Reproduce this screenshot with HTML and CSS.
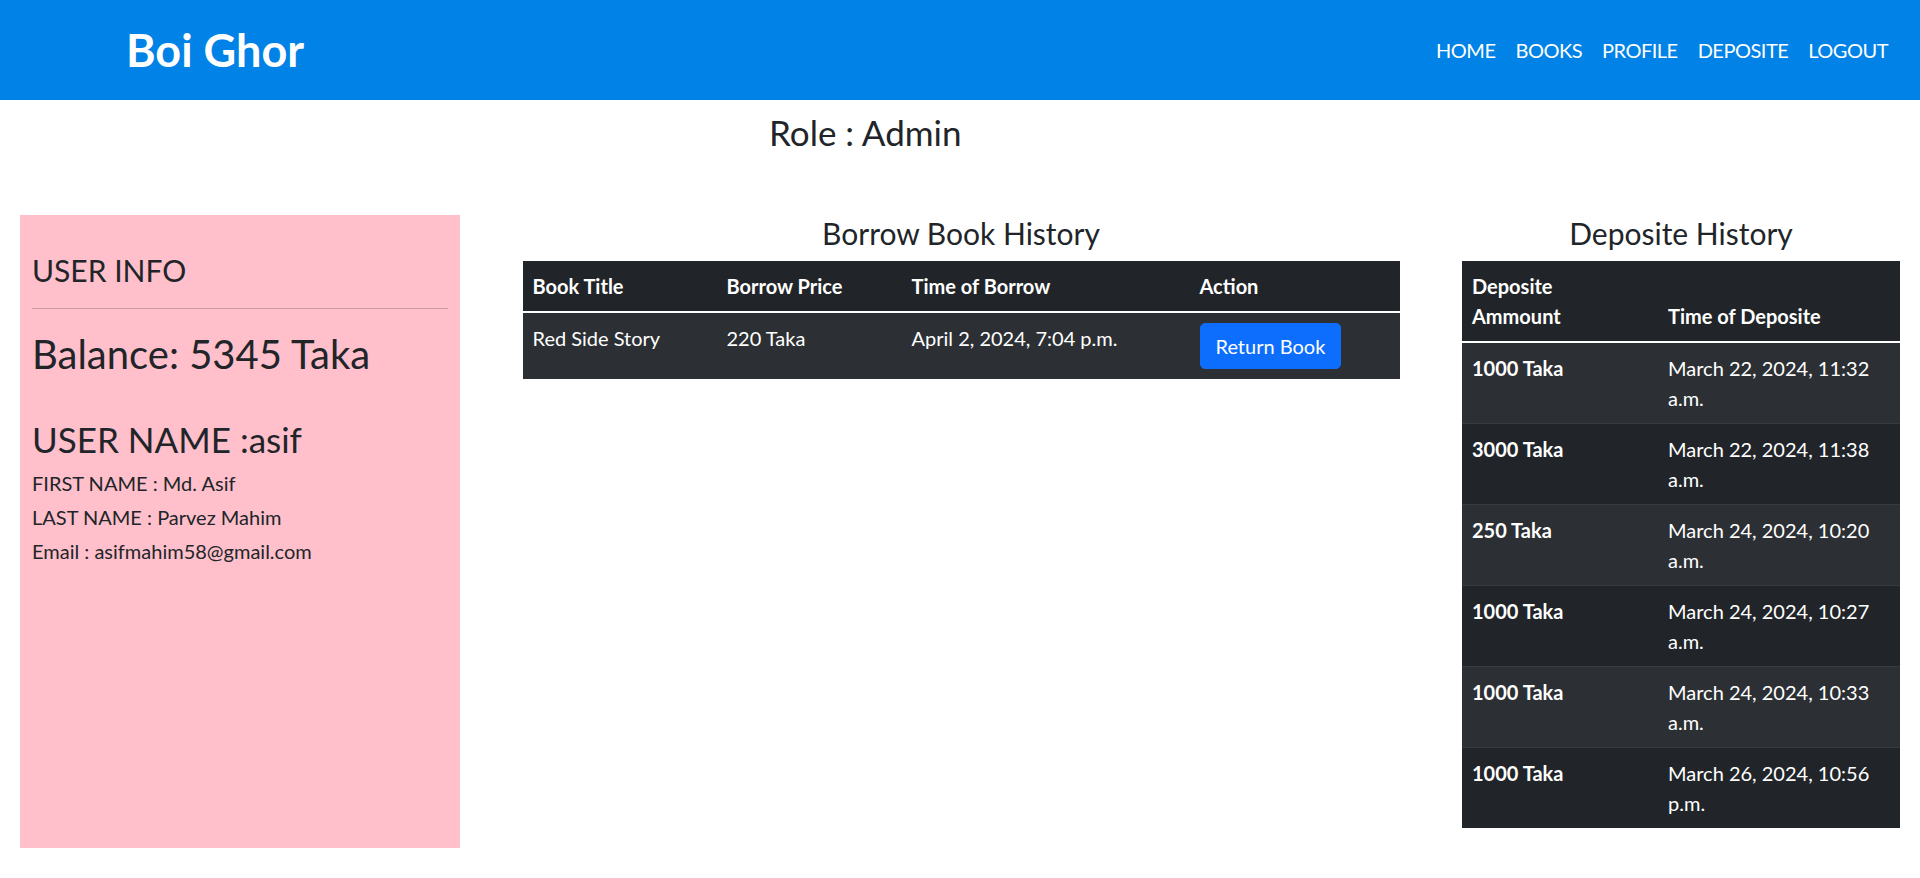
FILE: index.html
```html
<!DOCTYPE html>
<html lang="en">
<head>
<meta charset="utf-8">
<title>Boi Ghor - Profile</title>
<link rel="stylesheet" href="styles.css">
</head>
<body>
<nav class="navbar">
  <div class="brand">Boi Ghor</div>
  <ul class="nav-links">
    <li><a href="#">HOME</a></li>
    <li><a href="#">BOOKS</a></li>
    <li><a href="#">PROFILE</a></li>
    <li><a href="#">DEPOSITE</a></li>
    <li><a href="#">LOGOUT</a></li>
  </ul>
</nav>

<main class="page">
  <h3 class="role">Role : Admin</h3>

  <div class="columns">
    <aside class="user-card">
      <h4 class="card-title">USER INFO</h4>
      <hr class="card-rule">
      <h2 class="balance">Balance: 5345 Taka</h2>
      <h3 class="username">USER NAME :asif</h3>
      <p class="info-line">FIRST NAME : Md. Asif</p>
      <p class="info-line">LAST NAME : Parvez Mahim</p>
      <p class="info-line">Email : asifmahim58@gmail.com</p>
    </aside>

    <section class="history borrow">
      <h4 class="history-title">Borrow Book History</h4>
      <table class="dark-table">
        <thead>
          <tr>
            <th class="c-title">Book Title</th>
            <th class="c-price">Borrow Price</th>
            <th class="c-time">Time of Borrow</th>
            <th class="c-action">Action</th>
          </tr>
        </thead>
        <tbody>
          <tr>
            <td>Red Side Story</td>
            <td>220 Taka</td>
            <td>April 2, 2024, 7:04 p.m.</td>
            <td><button class="btn-return" type="button">Return Book</button></td>
          </tr>
        </tbody>
      </table>
    </section>

    <section class="history deposit">
      <h4 class="history-title">Deposite History</h4>
      <table class="dark-table">
        <thead>
          <tr>
            <th class="c-amount">Deposite<br>Ammount</th>
            <th class="c-dtime">Time of Deposite</th>
          </tr>
        </thead>
        <tbody>
          <tr><th>1000 Taka</th><td>March 22, 2024, 11:32 a.m.</td></tr>
          <tr><th>3000 Taka</th><td>March 22, 2024, 11:38 a.m.</td></tr>
          <tr><th>250 Taka</th><td>March 24, 2024, 10:20 a.m.</td></tr>
          <tr><th>1000 Taka</th><td>March 24, 2024, 10:27 a.m.</td></tr>
          <tr><th>1000 Taka</th><td>March 24, 2024, 10:33 a.m.</td></tr>
          <tr><th>1000 Taka</th><td>March 26, 2024, 10:56 p.m.</td></tr>
        </tbody>
      </table>
    </section>
  </div>
</main>
</body>
</html>
```

FILE: styles.css
```css
* { box-sizing: border-box; }

html, body {
  margin: 0;
  padding: 0;
  background: #fff;
}

body {
  font-family: "Lato", "Open Sans", "DejaVu Sans", sans-serif;
  font-size: 20px;
  line-height: 1.5;
  color: #212529;
}

h2, h3, h4, p { margin: 0; font-weight: 400; line-height: 1.2; }

/* ---------- navbar ---------- */
.navbar {
  height: 100px;
  background: #0082e6;
  display: flex;
  align-items: center;
  justify-content: space-between;
  padding: 0 32px 0 126px;
}

.brand {
  color: #fff;
  font-weight: 700;
  font-size: 45px;
  line-height: normal;
}

.nav-links {
  list-style: none;
  margin: 0;
  padding: 0;
  display: flex;
  gap: 20px;
}

.nav-links a {
  color: #fff;
  text-decoration: none;
  font-size: 20px;
  letter-spacing: -0.5px;
  line-height: normal;
}

/* ---------- page ---------- */
.page {
  padding: 0 20px;
}

.role {
  font-size: 35px;
  margin: 11px 0 0 749px;
}

.columns {
  margin-top: 62px;
  display: grid;
  grid-template-columns: 440px 877px 438px;
  justify-content: space-between;
  align-items: start;
}

/* ---------- user card ---------- */
.user-card {
  background: #ffc0cb;
  height: 633px;
  padding: 37px 12px 0;
}

.card-title { font-size: 30px; }

.card-rule {
  margin: 20px 0 21px;
  border: 0;
  border-top: 1px solid #212529;
  opacity: .25;
}

.balance { font-size: 40px; margin-bottom: 40px; }

.username { font-size: 35px; margin-bottom: 8px; }

.info-line {
  font-size: 20px;
  line-height: 30px;
  margin-bottom: 4px;
}

/* ---------- history tables ---------- */
.history-title {
  font-size: 30px;
  text-align: center;
  margin-bottom: 10px;
}

.dark-table {
  width: 100%;
  border-collapse: collapse;
  table-layout: fixed;
  background: #212529;
  color: #fff;
  vertical-align: top;
}

.dark-table th,
.dark-table td {
  padding: 10px;
  text-align: left;
  border-bottom: 1px solid #373b3e;
  line-height: 30px;
}

.dark-table thead th {
  vertical-align: bottom;
  font-weight: 700;
}

.dark-table tbody {
  border-top: 2px solid #fff;
}

.dark-table tbody th,
.dark-table tbody td {
  vertical-align: top;
}

.dark-table tbody th { font-weight: 700; }

.dark-table tbody tr:nth-child(odd) {
  background: #2c3034;
}

.dark-table tbody tr:last-child th,
.dark-table tbody tr:last-child td {
  border-bottom: 0;
}

.c-title { width: 194px; }
.c-price { width: 185px; }
.c-time { width: 288px; }
.c-action { width: 210px; }

.c-amount { width: 196px; }
.c-dtime { width: 242px; }

.btn-return {
  font-family: inherit;
  font-size: 20px;
  line-height: 30px;
  color: #fff;
  background: #0d6efd;
  border: 1px solid #0d6efd;
  border-radius: 5px;
  padding: 7px 15px;
  cursor: pointer;
}
```
